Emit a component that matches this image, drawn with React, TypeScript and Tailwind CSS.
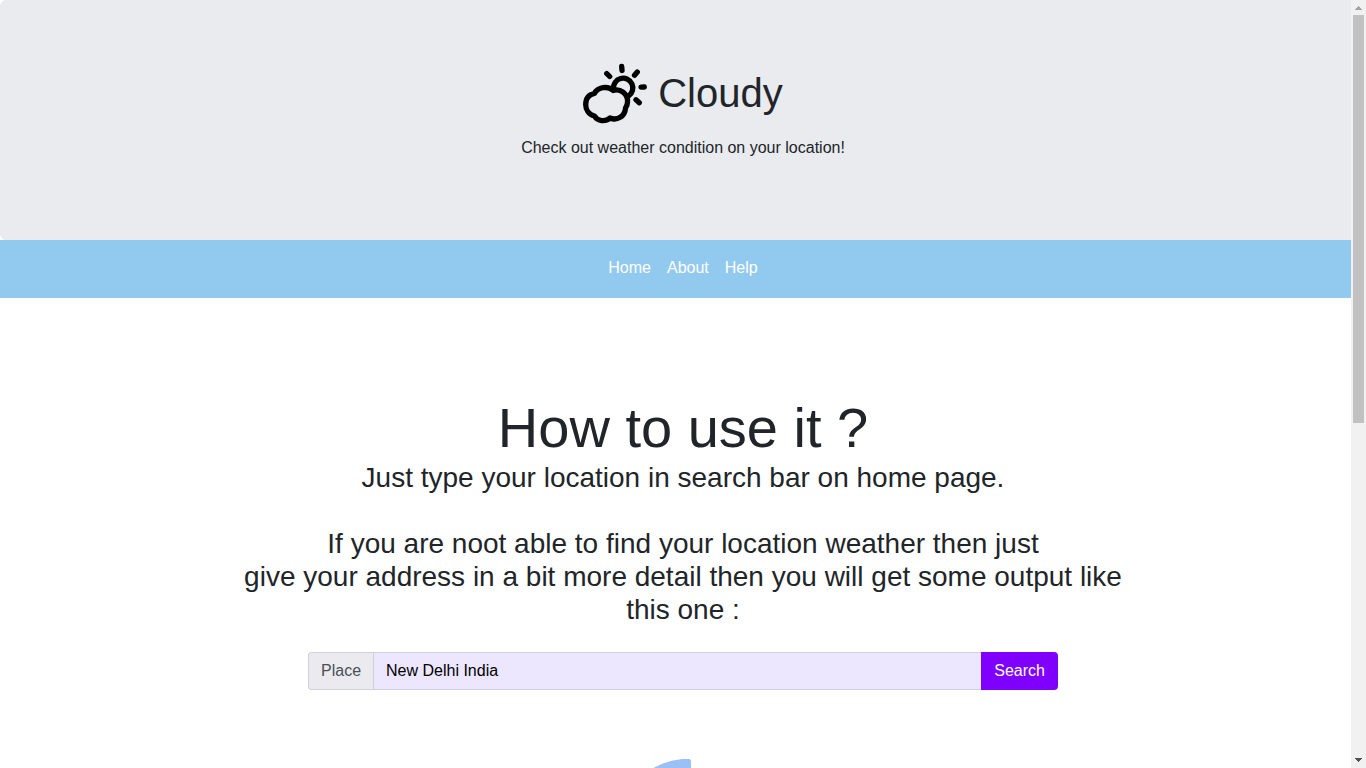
import React from "react";

const links = ["Home", "About", "Help"];

function WeatherIcon() {
  return (
    <svg
      viewBox="0 0 64 64"
      className="h-16 w-16 shrink-0"
      fill="none"
      stroke="#000"
      strokeWidth="5.3"
      strokeLinecap="round"
      strokeLinejoin="round"
      aria-hidden="true"
    >
      <path d="M30.500 28A9.700 9.700 0 1 1 45.500 35" />
      <path d="M11.500 32.500C14.500 26 25 24.500 30 29.500C37 27 45 32.500 44.500 41C44.500 43.500 43.500 45.500 42.500 47C42 55.500 34 60 27 57C22.500 61 14.500 60.500 11.500 55C5.500 53.500 2.700 48.500 2.700 43.500C2.700 37.500 6 33.500 11.500 32.500Z" />
      <path d="M38.700 5.500L39 9.500" />
      <path d="M23.700 12.500L26.700 15.500" />
      <path d="M54.300 11L51.500 14.300" />
      <path d="M58 26.200L61.300 26" />
      <path d="M53 38.800L56.300 41.800" />
    </svg>
  );
}

function ScrollBar() {
  return (
    <div aria-hidden="true" className="absolute inset-y-0 right-0 flex w-[15px] flex-col bg-[#f1f1f1]">
      <svg className="h-[14px] w-[15px] shrink-0" viewBox="0 0 15 14" fill="#a3a3a3" shapeRendering="crispEdges">
        <path d="M7 6h1v1h1v1h1v1h1v1H4V9h1V8h1V7h1z" />
      </svg>
      <div className="flex flex-1 flex-col pt-px">
        <div className="mx-[2px] grow-[408] bg-[#c1c1c1]" />
        <div className="grow-[331]" />
      </div>
      <svg className="h-[14px] w-[15px] shrink-0" viewBox="0 0 15 14" fill="#505050" shapeRendering="crispEdges">
        <path d="M4 4h7v1h-1v1H9v1H8v1H7V7H6V6H5V5H4z" />
      </svg>
    </div>
  );
}

export default function App() {
  return (
    <div className="relative h-screen overflow-hidden bg-white font-['Liberation_Sans',Arial,sans-serif] text-base text-[#212529]">
      <header className="rounded-md bg-[#e9ebee] px-8 pt-[61px] pb-20 text-center">
        <h1 className="flex items-center justify-center gap-[11px] text-[40px] leading-[48px]">
          <WeatherIcon />
          Cloudy
        </h1>
        <p className="mt-[11px] leading-6">Check out weather condition on your location!</p>
      </header>
      <nav className="bg-[#92c9ef] px-4 pt-2 pb-[10px]">
        <ul className="flex justify-center">
          {links.map((link) => (
            <li key={link}>
              <a href="#" className="block p-2 text-white">
                {link}
              </a>
            </li>
          ))}
        </ul>
      </nav>
      <main className="mx-auto flex max-w-[930px] flex-col items-center px-[15px] pt-24 text-center">
        <h2 className="text-[56px] leading-[67px]">How to use it ?</h2>
        <p className="text-[28px] leading-[33px]">
          Just type your location in search bar on home page.
          <br />
          <br />
          If you are noot able to find your location weather then just
          <br />
          give your address in a bit more detail then you will get some output like this one :
        </p>
        <form className="mt-[26px] flex w-full max-w-[750px]" onSubmit={(e) => e.preventDefault()}>
          <label
            htmlFor="place"
            className="rounded-l border border-r-0 border-[#ced0da] bg-[#ebebef] px-3 py-[6px] leading-6 text-[#495057]"
          >
            Place
          </label>
          <input
            id="place"
            type="text"
            defaultValue="New Delhi India"
            className="min-w-0 flex-1 border border-r-0 border-[#ced0da] bg-[#ece6ff] px-3 py-[6px] leading-6 text-black outline-none"
          />
          <button type="submit" className="rounded-r bg-[#8000ff] px-[13px] leading-6 text-white">
            Search
          </button>
        </form>
        <svg className="mt-[69px] h-20 w-40" viewBox="0 0 160 80" fill="#9bc0f5" aria-hidden="true">
          <path d="M16 80V69A69 69 0 0 1 79 0H86Q88 0 88 2L89 80z" />
        </svg>
      </main>
      <ScrollBar />
    </div>
  );
}
